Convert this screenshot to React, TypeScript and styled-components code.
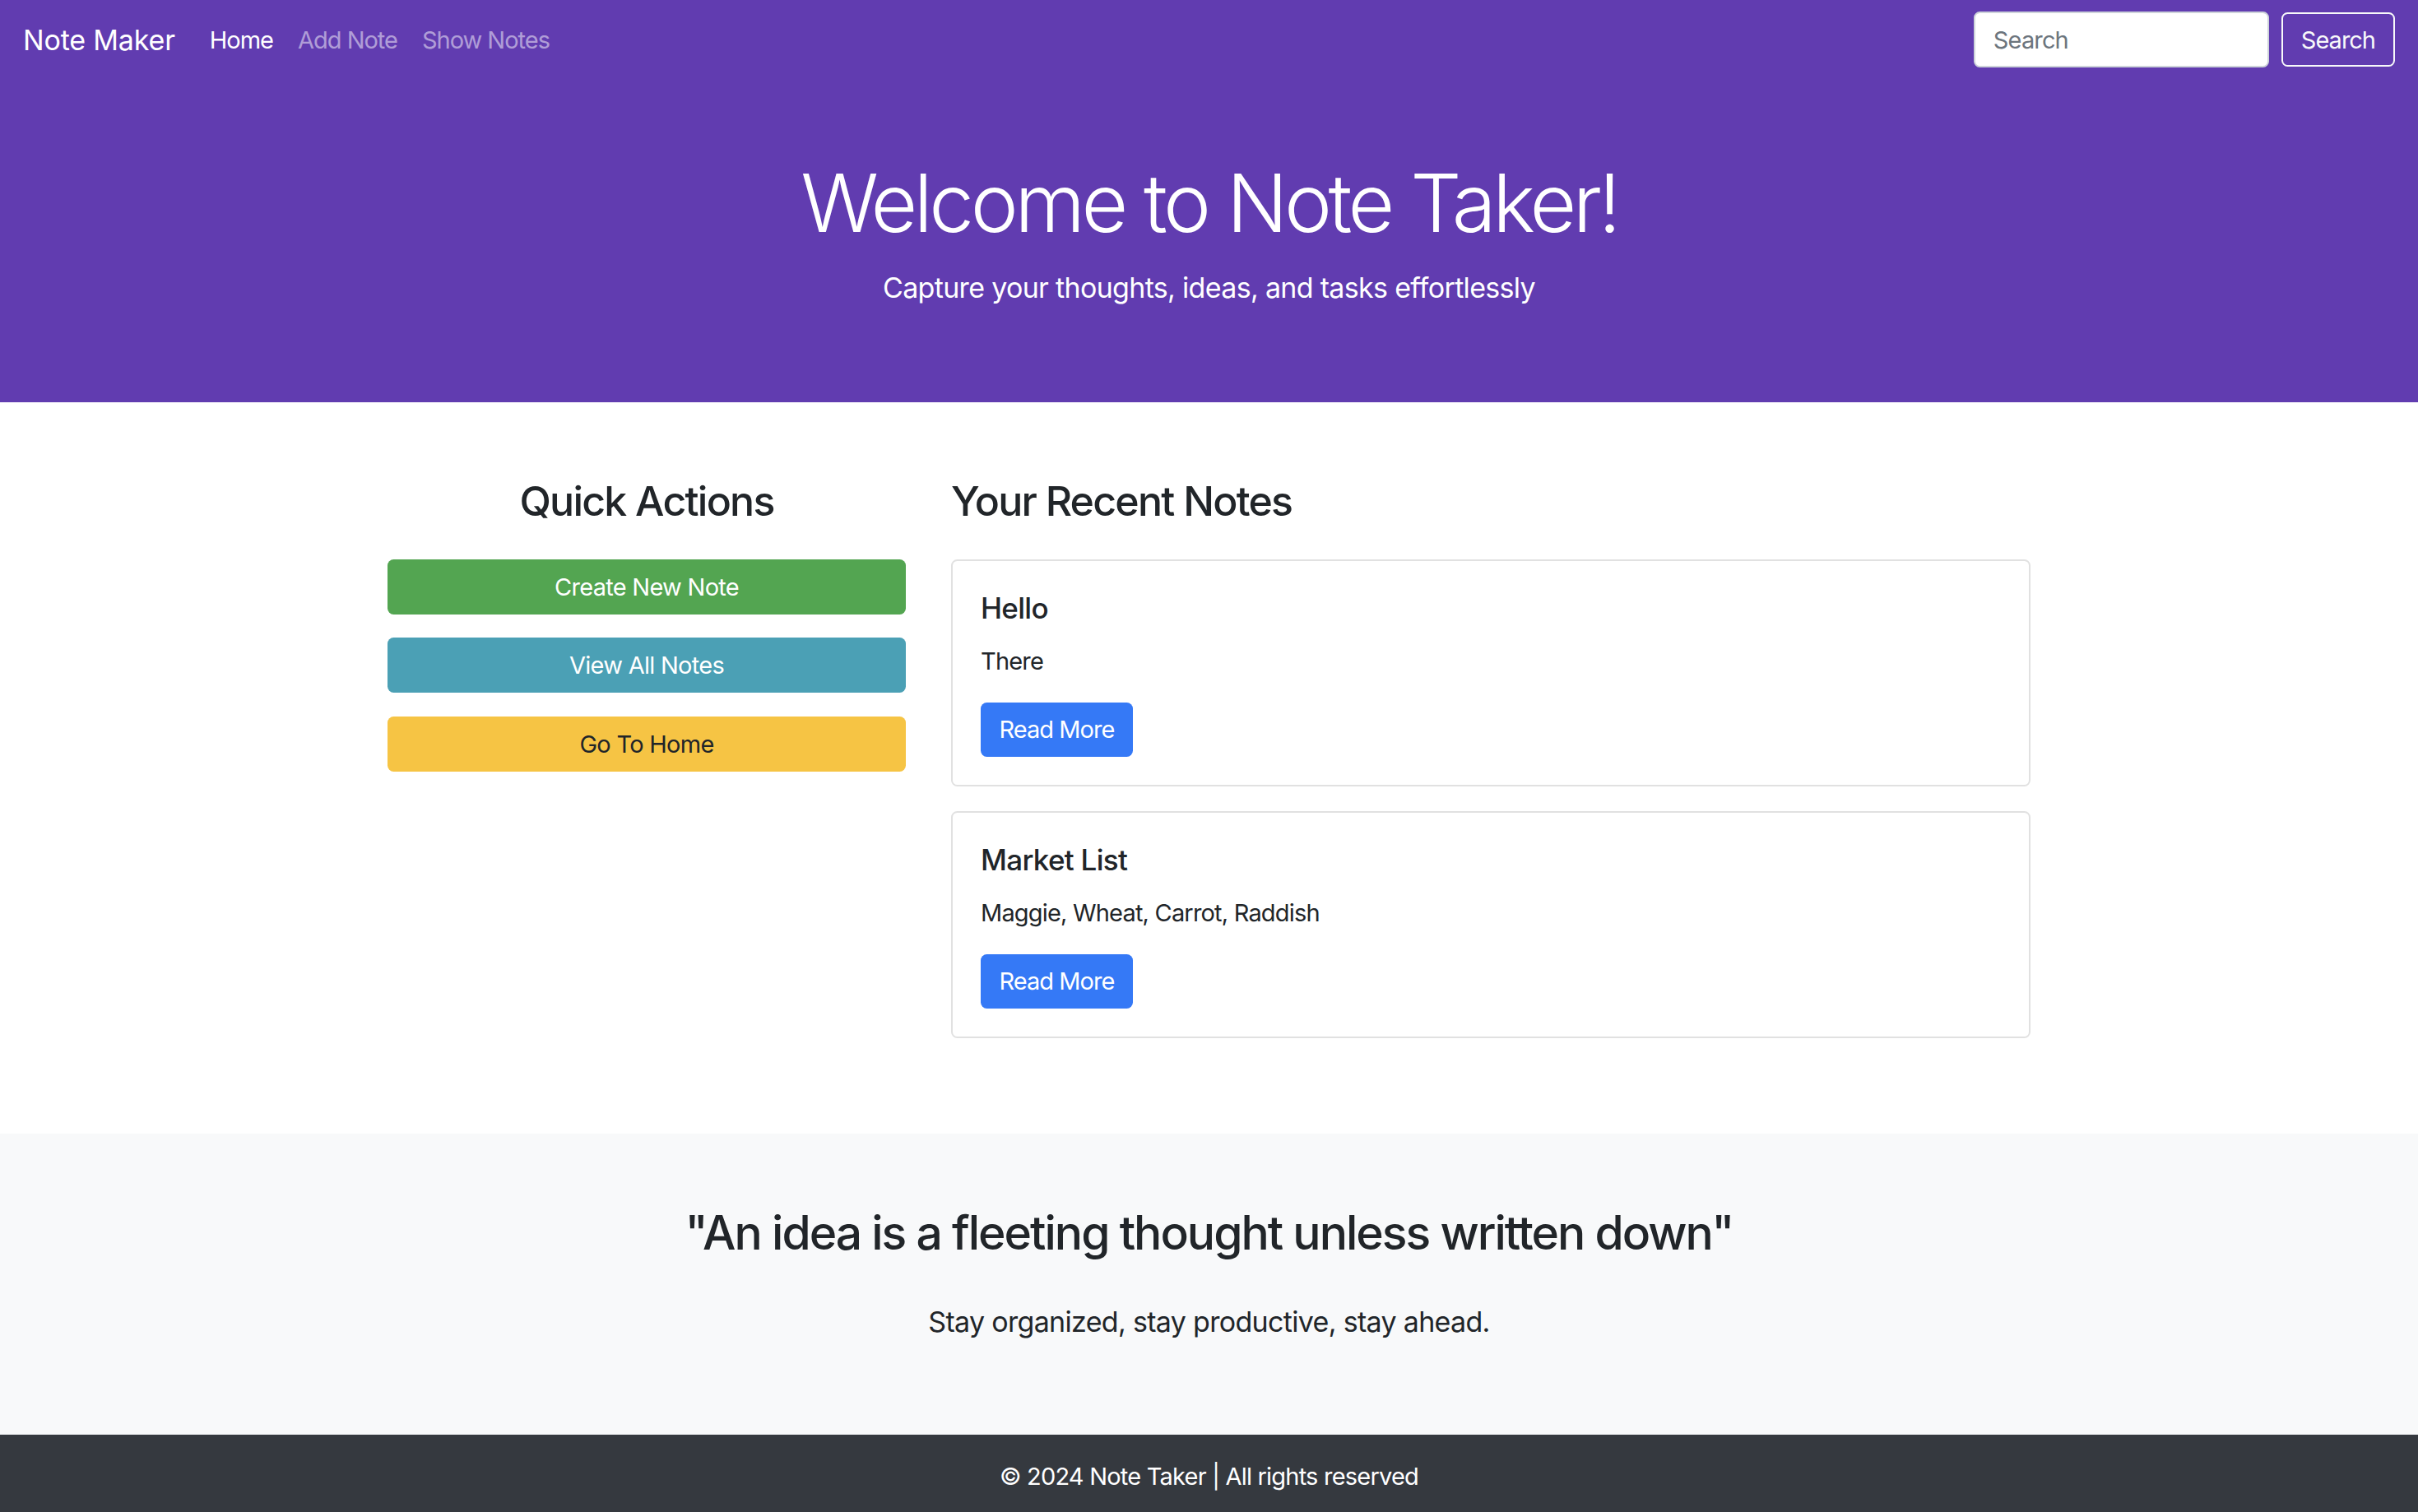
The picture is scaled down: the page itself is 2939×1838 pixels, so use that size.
import React from "react";
import styled, { createGlobalStyle } from "styled-components";

const GlobalStyle = createGlobalStyle`
  *, *::before, *::after { box-sizing: border-box; }
  html, body { margin: 0; padding: 0; }
  body {
    font-family: Inter, "Noto Sans", "Liberation Sans", sans-serif;
    color: #212529;
    background: #fff;
    letter-spacing: -0.025em;
    -webkit-font-smoothing: antialiased;
  }
`;

const Page = styled.div`
  display: flex;
  flex-direction: column;
`;

const Navbar = styled.nav`
  display: flex;
  align-items: center;
  justify-content: space-between;
  background: #613cb0;
  padding: 14px 28px 16px 28px;
`;

const NavLeft = styled.div`
  display: flex;
  align-items: center;
`;

const Brand = styled.a`
  font-size: 34px;
  line-height: 1.5;
  letter-spacing: -0.005em;
  color: #fff;
  text-decoration: none;
  margin-right: 27px;
`;

const NavList = styled.ul`
  list-style: none;
  display: flex;
  margin: 0;
  padding: 0;
`;

const NavLink = styled.a<{ $active?: boolean }>`
  display: block;
  padding: 0 15px;
  font-size: 29px;
  line-height: 45px;
  letter-spacing: -0.035em;
  color: ${(p) => (p.$active ? "#ffffff" : "rgba(255, 255, 255, 0.5)")};
  text-decoration: none;
`;

const SearchForm = styled.form`
  display: flex;
  align-items: center;
  gap: 15px;
`;

const SearchInput = styled.input`
  width: 359px;
  height: 68px;
  padding: 0 22px;
  font: inherit;
  font-size: 29px;
  letter-spacing: -0.03em;
  color: #495057;
  background: #fff;
  border: 2px solid #ced4da;
  border-radius: 7.5px;
  outline: none;
  &::placeholder {
    color: #6c757d;
  }
`;

const OutlineButton = styled.button`
  height: 66px;
  padding: 0 22px;
  font: inherit;
  font-size: 29px;
  letter-spacing: -0.035em;
  color: #f8f9fa;
  background: transparent;
  border: 2px solid #f8f9fa;
  border-radius: 7.5px;
`;

const Hero = styled.header`
  background: #613cb0;
  color: #fff;
  text-align: center;
  padding: 90px 30px 84px;
`;

const HeroTitle = styled.h1`
  margin: 0 0 18px;
  font-size: 98px;
  font-weight: 300;
  line-height: 1.2;
  letter-spacing: -0.045em;
`;

const Lead = styled.p`
  margin: 0 0 30px;
  font-size: 34px;
  font-weight: 400;
  line-height: 51px;
  letter-spacing: -0.02em;
`;

const Main = styled.main`
  padding: 90px 0 116px;
`;

const Columns = styled.div`
  display: grid;
  grid-template-columns: 630px 1312px;
  column-gap: 55px;
  justify-content: center;
  align-items: start;
`;

const Column = styled.section`
  display: flex;
  flex-direction: column;
`;

const SectionTitle = styled.h3<{ $center?: boolean }>`
  margin: 0 0 41px;
  font-size: 50px;
  font-weight: 500;
  line-height: 1.2;
  letter-spacing: -0.035em;
  text-align: ${(p) => (p.$center ? "center" : "left")};
`;

const ActionList = styled.div`
  display: flex;
  flex-direction: column;
  gap: 28.5px;
`;

const variants = {
  success: { bg: "#53a551", fg: "#ffffff" },
  info: { bg: "#4ba0b5", fg: "#ffffff" },
  warning: { bg: "#f6c444", fg: "#212529" },
};

const ActionButton = styled.button<{ $variant: keyof typeof variants }>`
  width: 100%;
  height: 67px;
  font: inherit;
  font-size: 29px;
  letter-spacing: -0.025em;
  border: none;
  border-radius: 7.5px;
  background: ${(p) => variants[p.$variant].bg};
  color: ${(p) => variants[p.$variant].fg};
`;

const CardList = styled.div`
  display: flex;
  flex-direction: column;
  gap: 30px;
`;

const Card = styled.article`
  border: 2px solid #e1e1e1;
  border-radius: 7.5px;
  padding: 36px 36px 34px 34px;
  background: #fff;
`;

const CardTitle = styled.h5`
  margin: 0 0 21px;
  font-size: 35px;
  font-weight: 500;
  line-height: 42px;
  letter-spacing: -0.02em;
`;

const CardText = styled.p`
  margin: 0 0 28px;
  font-size: 29px;
  line-height: 45px;
  letter-spacing: -0.028em;
`;

const PrimaryButton = styled.a`
  display: inline-flex;
  align-items: center;
  height: 66px;
  padding: 0 22.5px;
  font-size: 29px;
  letter-spacing: -0.033em;
  color: #fff;
  background: #3579f6;
  border-radius: 7.5px;
  text-decoration: none;
`;

const QuoteSection = styled.section`
  background: #f8f9fa;
  text-align: center;
  padding: 87px 30px 82px;
`;

const Quote = styled.h2`
  margin: 0 0 48.5px;
  font-size: 57px;
  font-weight: 500;
  line-height: 1.2;
  letter-spacing: -0.035em;
`;

const Footer = styled.footer`
  background: #35393f;
  color: #fff;
  text-align: center;
  padding: 29px 30px 30px;
`;

const FooterText = styled.p`
  margin: 0;
  font-size: 29px;
  line-height: 1.5;
  letter-spacing: -0.027em;
`;

const notes = [
  { title: "Hello", body: "There" },
  { title: "Market List", body: "Maggie, Wheat, Carrot, Raddish" },
];

export default function App() {
  return (
    <Page>
      <GlobalStyle />
      <Navbar>
        <NavLeft>
          <Brand href="#">Note Maker</Brand>
          <NavList>
            <li>
              <NavLink href="#" $active>
                Home
              </NavLink>
            </li>
            <li>
              <NavLink href="#">Add Note</NavLink>
            </li>
            <li>
              <NavLink href="#">Show Notes</NavLink>
            </li>
          </NavList>
        </NavLeft>
        <SearchForm onSubmit={(e) => e.preventDefault()}>
          <SearchInput type="search" placeholder="Search" />
          <OutlineButton type="submit">Search</OutlineButton>
        </SearchForm>
      </Navbar>

      <Hero>
        <HeroTitle>Welcome to Note Taker!</HeroTitle>
        <Lead>Capture your thoughts, ideas, and tasks effortlessly</Lead>
      </Hero>

      <Main>
        <Columns>
          <Column>
            <SectionTitle $center>Quick Actions</SectionTitle>
            <ActionList>
              <ActionButton $variant="success">Create New Note</ActionButton>
              <ActionButton $variant="info">View All Notes</ActionButton>
              <ActionButton $variant="warning">Go To Home</ActionButton>
            </ActionList>
          </Column>
          <Column>
            <SectionTitle>Your Recent Notes</SectionTitle>
            <CardList>
              {notes.map((n) => (
                <Card key={n.title}>
                  <CardTitle>{n.title}</CardTitle>
                  <CardText>{n.body}</CardText>
                  <PrimaryButton href="#">Read More</PrimaryButton>
                </Card>
              ))}
            </CardList>
          </Column>
        </Columns>
      </Main>

      <QuoteSection>
        <Quote>"An idea is a fleeting thought unless written down"</Quote>
        <Lead>Stay organized, stay productive, stay ahead.</Lead>
      </QuoteSection>

      <Footer>
        <FooterText>© 2024 Note Taker | All rights reserved</FooterText>
      </Footer>
    </Page>
  );
}
